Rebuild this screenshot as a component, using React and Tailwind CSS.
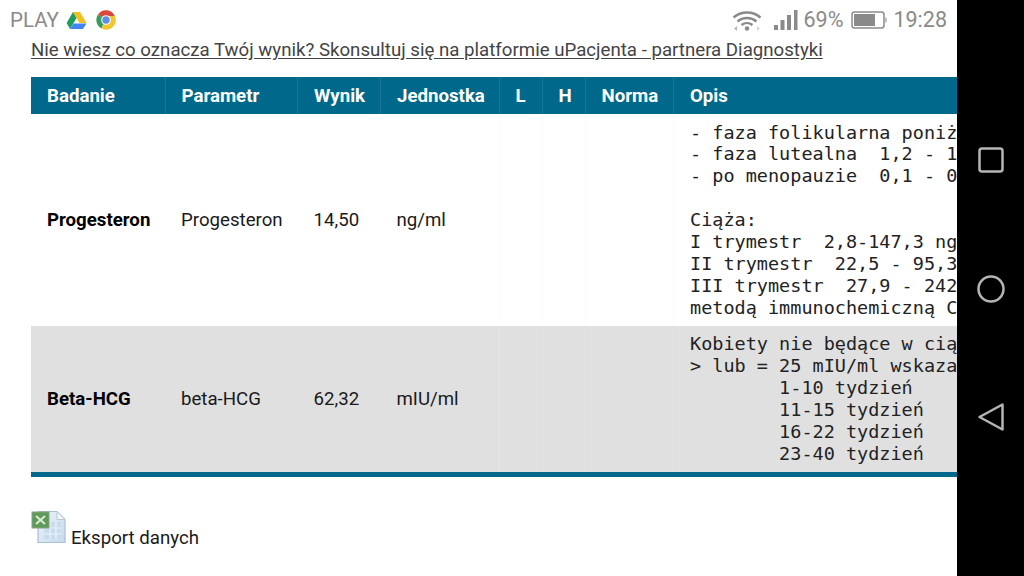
import React from 'react';

const columns = [
  { label: 'Badanie', width: 'w-[134px]' },
  { label: 'Parametr', width: 'w-[132.5px]' },
  { label: 'Wynik', width: 'w-[83px]' },
  { label: 'Jednostka', width: 'w-[118.5px]' },
  { label: 'L', width: 'w-[43px]' },
  { label: 'H', width: 'w-[43px]' },
  { label: 'Norma', width: 'w-[88.5px]' },
  { label: 'Opis', width: 'w-[626.5px]' },
];

const progesteronOpis = `- faza folikularna poniżej 1,4 ng/ml
- faza lutealna  1,2 - 15,9 ng/ml
- po menopauzie  0,1 - 0,7 ng/ml

Ciąża:
I trymestr  2,8-147,3 ng/ml
II trymestr  22,5 - 95,3 ng/ml
III trymestr  27,9 - 242,5 ng/ml
metodą immunochemiczną CLIA`;

const betaOpis = `Kobiety nie będące w ciąży < 5 mIU/ml
> lub = 25 mIU/ml wskazanie ciąży
        1-10 tydzień
        11-15 tydzień
        16-22 tydzień
        23-40 tydzień`;

const rows = [
  { badanie: 'Progesteron', parametr: 'Progesteron', wynik: '14,50', jednostka: 'ng/ml', opis: progesteronOpis, height: 'h-[212px]', bg: 'bg-white', line: 'border-[#fafafa]' },
  { badanie: 'Beta-HCG', parametr: 'beta-HCG', wynik: '62,32', jednostka: 'mIU/ml', opis: betaOpis, height: 'h-[148px]', bg: 'bg-[#e0e0e0]', line: 'border-[#e3e3e3]' },
];

function DriveIcon() {
  return (
    <svg width="21" height="19" viewBox="0 0 21 19" className="ml-[7px]">
      <path d="M7 1h7l6.500 11h-7z" fill="#f4c01e" />
      <path d="M7 1l3.500 6L4 18 .6 12z" fill="#1e9e5a" />
      <path d="M7.500 12.500h13L17 18H4z" fill="#4285f4" />
    </svg>
  );
}

function ChromeIcon() {
  return (
    <svg width="20" height="20" viewBox="0 0 20 20" className="ml-[9px]">
      <path d="M10 10 2 4.500A9.600 9.600 0 0 1 18.800 6H10z" fill="#d9483b" />
      <path d="M10 10l-4 7-.1 1.600A9.600 9.600 0 0 1 2 4.500z" fill="#3a9c5a" />
      <path d="M10 6h8.800A9.600 9.600 0 0 1 5.900 18.700z" fill="#f3c530" />
      <circle cx="10" cy="10" r="4.800" fill="#fff" />
      <circle cx="10" cy="10" r="3.700" fill="#5b8fe8" />
    </svg>
  );
}

function WifiIcon() {
  return (
    <svg width="30" height="21" viewBox="0 0 30 21" fill="none" stroke="#8a8a8a" strokeWidth="2.400">
      <path d="M1.500 7.500C9 .8 21 .8 28.500 7.500" />
      <path d="M5.500 11.500c5.500-4.600 13.500-4.600 19 0" />
      <path d="M9.500 15c3.200-2.500 7.800-2.500 11 0" />
      <circle cx="15" cy="18.500" r="2.200" fill="#8a8a8a" stroke="none" />
      <path d="M5 16l-3 2.500 3 2.500z" fill="#b5b5b5" stroke="none" />
      <path d="M25 16l3 2.500-3 2.500z" fill="#d5d5d5" stroke="none" />
    </svg>
  );
}

function SignalIcon() {
  return (
    <svg width="24" height="20" viewBox="0 0 24 20" fill="#8a8a8a" className="ml-[12px]">
      <rect x="0" y="15" width="4" height="5" />
      <rect x="6.500" y="10" width="4" height="10" />
      <rect x="13" y="5" width="4" height="15" />
      <rect x="20" y="0" width="3.500" height="20" />
    </svg>
  );
}

function BatteryIcon() {
  return (
    <svg width="36" height="18" viewBox="0 0 36 18" className="ml-[8px]">
      <rect x="1" y="1" width="32" height="16" rx="2.500" fill="none" stroke="#8a8a8a" strokeWidth="1.500" />
      <rect x="3" y="3" width="21" height="12" fill="#8a8a8a" />
      <path d="M34.500 6c1.500.5 1.500 5.500 0 6z" fill="#8a8a8a" />
    </svg>
  );
}

function ExcelIcon() {
  return (
    <svg width="36" height="34" viewBox="0 0 36 34" className="shrink-0">
      <defs>
        <linearGradient id="sheet" x1="0" y1="0" x2="1" y2="1">
          <stop offset="0" stopColor="#eef4fa" />
          <stop offset="1" stopColor="#c6d9ec" />
        </linearGradient>
      </defs>
      <path d="M7 1.500h19l8 8V32.500H7z" fill="url(#sheet)" stroke="#a9c0d8" strokeWidth="1.200" />
      <path d="M26 1.500v8h8z" fill="#f4f7fb" stroke="#b5c9dd" strokeWidth="1" />
      <path d="M13 12h17v17H13z" fill="#c9dbec" />
      <path d="M19 12v17M25 12v17M13 18h17M13 24h17" stroke="#edf3f9" strokeWidth="1.200" />
      <rect x="1" y="2" width="17" height="16" fill="#5e9a5a" stroke="#86a380" strokeWidth="1" />
      <path d="M5 6l9 8M14 6l-9 8" stroke="#dcebd6" strokeWidth="2" />
    </svg>
  );
}

function NavBar() {
  return (
    <div className="flex w-[67px] shrink-0 flex-col items-center bg-black pt-[146px]">
      <svg width="28" height="28" viewBox="0 0 28 28" fill="none" stroke="#b5b5b5" strokeWidth="2.500">
        <rect x="2.500" y="2.500" width="23" height="23" rx="2.500" />
      </svg>
      <svg width="30" height="30" viewBox="0 0 30 30" fill="none" stroke="#b5b5b5" strokeWidth="2.500" className="mt-[100px]">
        <circle cx="15" cy="15" r="12.500" />
      </svg>
      <svg width="28" height="30" viewBox="0 0 28 30" fill="none" stroke="#b5b5b5" strokeWidth="2.500" strokeLinejoin="round" className="mt-[98px]">
        <path d="M25.500 2.500v25L2.500 15z" />
      </svg>
    </div>
  );
}

export default function App() {
  return (
    <div className="flex h-[576px] w-[1024px] overflow-hidden bg-white font-['Roboto',sans-serif] text-[18.67px] text-[#1a1a1a]">
      <div className="min-w-0 flex-1 overflow-hidden">
        {/* Status bar */}
        <div className="flex h-[40px] items-center pl-[10px] pr-[10px] text-[#8a8a8a]">
          <span className="text-[20.5px]">PLAY</span>
          <DriveIcon />
          <ChromeIcon />
          <div className="ml-auto flex items-center text-[21.5px]">
            <WifiIcon />
            <SignalIcon />
            <span className="ml-[6px]">69%</span>
            <BatteryIcon />
            <span className="ml-[6px]">19:28</span>
          </div>
        </div>

        <div className="pl-[31px]">
          <a className="block h-[37px] whitespace-nowrap leading-[21px] text-[#444] underline underline-offset-2">
            Nie wiesz co oznacza Twój wynik? Skonsultuj się na platformie uPacjenta - partnera Diagnostyki
          </a>

          <table className="w-[1269px] table-fixed border-collapse border-b-[5px] border-[#00688b]">
            <colgroup>
              {columns.map((col) => (
                <col key={col.label} className={col.width} />
              ))}
            </colgroup>
            <thead>
              <tr className="h-[37px] bg-[#00688b] text-white">
                {columns.map((col, i) => (
                  <th
                    key={col.label}
                    className={`px-4 py-0 text-left font-bold ${i > 0 ? 'border-l border-[#187595]' : ''}`}
                  >
                    {col.label}
                  </th>
                ))}
              </tr>
            </thead>
            <tbody>
              {rows.map((row) => (
                <tr key={row.badanie} className={`${row.height} ${row.bg}`}>
                  <td className="px-4 font-bold text-black">{row.badanie}</td>
                  <td className="px-4">{row.parametr}</td>
                  <td className="px-4">{row.wynik}</td>
                  <td className="px-4">{row.jednostka}</td>
                  <td className={`border-l px-4 ${row.line}`}></td>
                  <td className={`border-l px-4 ${row.line}`}></td>
                  <td className={`border-l px-4 ${row.line}`}></td>
                  <td className={`border-l px-4 ${row.line}`}>
                    <pre className="font-['DejaVu_Sans_Mono',monospace] text-[18.5px] leading-[21.875px] text-[#222]">{row.opis}</pre>
                  </td>
                </tr>
              ))}
            </tbody>
          </table>

          <div className="mt-[33px] flex items-start">
            <ExcelIcon />
            <span className="ml-[4px] mt-[16px] leading-[24px]">Eksport danych</span>
          </div>
        </div>
      </div>
      <NavBar />
    </div>
  );
}
